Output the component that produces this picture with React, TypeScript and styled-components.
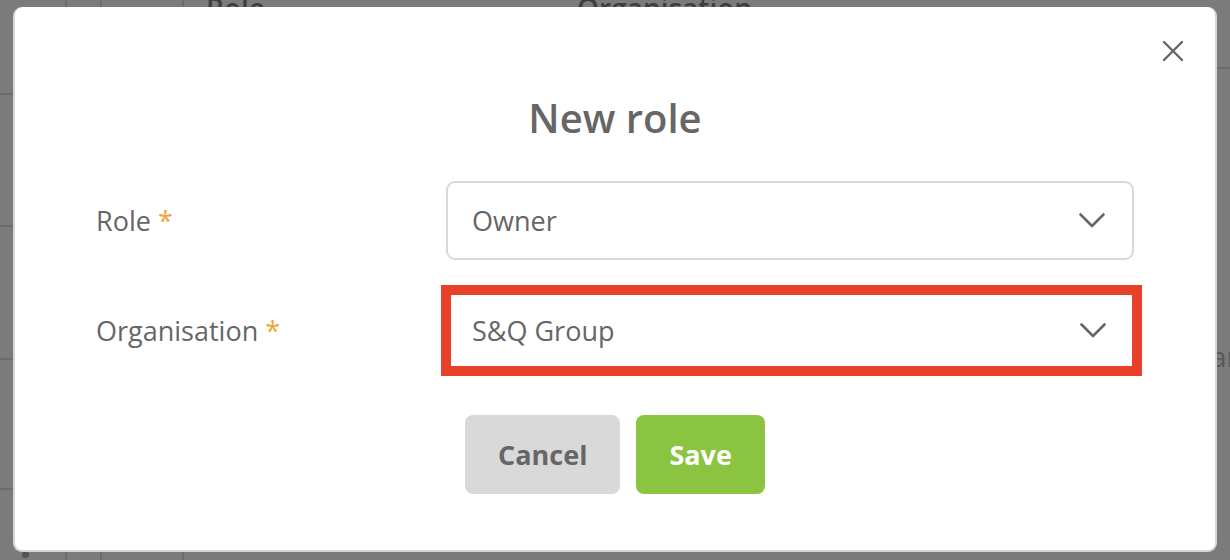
import React from "react";
import styled, { createGlobalStyle } from "styled-components";

const GlobalStyle = createGlobalStyle`
  html, body {
    margin: 0;
    padding: 0;
    overflow: hidden;
    background: #7b7b7b;
  }
  * {
    box-sizing: border-box;
  }
`;

const LINE = "#6c6c6c";

function App() {
  return (
    <>
      <GlobalStyle />
      <Page>
        <Table>
          <Row $height={104}>
            <Cell $line />
            <Cell $line />
            <Cell $line />
            <HeadCell>Role</HeadCell>
            <HeadCell>Organisation</HeadCell>
          </Row>
          <Row $height={132}>
            <Cell $line />
            <Cell $line />
            <Cell $line />
            <Cell />
            <Cell />
          </Row>
          <Row $height={133}>
            <Cell $line />
            <Cell $line />
            <Cell $line />
            <Cell />
            <Cell />
          </Row>
          <Row $height={130}>
            <Cell $line />
            <Cell $line />
            <Cell $line />
            <Cell />
            <Cell />
          </Row>
          <Row $height={120} $last>
            <Cell $line>
              <Bullet />
            </Cell>
            <Cell $line />
            <Cell $line />
            <Cell />
            <Cell />
          </Row>
        </Table>
        <SidePanel>
          <SideHead />
          <SideText>Plan</SideText>
        </SidePanel>
      </Page>

      <Modal>
        <CloseButton aria-label="Close">
          <svg width="20" height="20" viewBox="0 0 20 20">
            <path
              d="M1 1 L19 19 M19 1 L1 19"
              stroke="#666"
              strokeWidth="2.4"
              strokeLinecap="round"
            />
          </svg>
        </CloseButton>
        <Title>New role</Title>
        <Form>
          <FieldRow>
            <Label>
              Role <Required>*</Required>
            </Label>
            <Select>
              <span>Owner</span>
              <Chevron />
            </Select>
          </FieldRow>
          <FieldRow>
            <Label>
              Organisation <Required>*</Required>
            </Label>
            <Highlight>
              <Select $bare>
                <span>S&amp;Q Group</span>
                <Chevron />
              </Select>
            </Highlight>
          </FieldRow>
        </Form>
        <Actions>
          <Button>Cancel</Button>
          <Button $primary>Save</Button>
        </Actions>
      </Modal>
    </>
  );
}

const Chevron = () => (
  <svg width="26" height="15" viewBox="0 0 26 15">
    <path
      d="M1.5 1.5 L13 13 L24.5 1.5"
      fill="none"
      stroke="#666"
      strokeWidth="2.6"
      strokeLinecap="round"
      strokeLinejoin="round"
    />
  </svg>
);

export default App;

const Page = styled.div`
  display: flex;
  width: 100vw;
  height: 100vh;
  overflow: hidden;
  background: #7b7b7b;
  font-family: "Open Sans", "Liberation Sans", sans-serif;
`;

const Table = styled.div`
  width: 1160px;
  flex-shrink: 0;
  margin-top: -9px;
`;

const Row = styled.div<{ $height: number; $last?: boolean }>`
  display: grid;
  grid-template-columns: 67px 35px 82px 371px 1fr;
  height: ${(p) => p.$height}px;
  border-bottom: ${(p) => (p.$last ? "none" : `2px solid ${LINE}`)};
`;

const Cell = styled.div<{ $line?: boolean }>`
  border-right: ${(p) => (p.$line ? `2px solid ${LINE}` : "none")};
`;

const HeadCell = styled.div`
  padding-left: 22px;
  font-size: 28px;
  line-height: 34px;
  font-weight: 600;
  color: #3e3e3e;
`;

const Bullet = styled.div`
  width: 7px;
  height: 7px;
  margin: 61px 0 0 22px;
  border-radius: 50%;
  background: #555;
`;

const SidePanel = styled.div`
  flex: 1;
  display: flex;
  flex-direction: column;
`;

const SideHead = styled.div`
  height: 69px;
  border-bottom: 2px solid ${LINE};
`;

const SideText = styled.div`
  margin-top: 268px;
  padding-left: 27px;
  font-size: 28px;
  color: #585858;
  white-space: nowrap;
`;

const Modal = styled.div`
  position: fixed;
  top: 7px;
  left: 13px;
  width: 1204px;
  padding: 87px 81px 56px;
  background: #fff;
  border: 2px solid #d6d6d6;
  border-top: none;
  border-radius: 9px;
  font-family: "Open Sans", "Liberation Sans", sans-serif;
`;

const CloseButton = styled.button`
  position: absolute;
  top: 34px;
  right: 32px;
  width: 20px;
  height: 20px;
  padding: 0;
  border: none;
  background: none;
  cursor: pointer;
  display: flex;
`;

const Title = styled.h2`
  margin: 0 0 39px;
  text-align: center;
  font-size: 40px;
  line-height: 48px;
  font-weight: 600;
  color: #666;
`;

const Form = styled.div`
  display: flex;
  flex-direction: column;
  gap: 31px;
`;

const FieldRow = styled.div`
  display: flex;
  align-items: center;
`;

const Label = styled.div`
  width: 350px;
  flex-shrink: 0;
  font-size: 27px;
  color: #666;
`;

const Required = styled.span`
  color: #f0a33b;
`;

const Select = styled.div<{ $bare?: boolean }>`
  flex: 1;
  display: flex;
  align-items: center;
  justify-content: space-between;
  height: ${(p) => (p.$bare ? "71px" : "79px")};
  padding: ${(p) => (p.$bare ? "0 26px 0 21px" : "0 27px 0 24px")};
  border: ${(p) => (p.$bare ? "none" : "2px solid #d9d9d9")};
  border-radius: 9px;
  background: #fff;
  font-size: 27px;
  color: #666;
`;

const Highlight = styled.div`
  flex: 1;
  display: flex;
  margin: -6px -8px -6px -5px;
  border: 10px solid #e8412a;
`;

const Actions = styled.div`
  display: flex;
  justify-content: center;
  gap: 16px;
  margin-top: 45px;
`;

const Button = styled.button<{ $primary?: boolean }>`
  height: 79px;
  padding: 0 33px;
  border: none;
  border-radius: 8px;
  background: ${(p) => (p.$primary ? "#8bc441" : "#d9d9d9")};
  color: ${(p) => (p.$primary ? "#fff" : "#666")};
  font-family: "Open Sans", "Liberation Sans", sans-serif;
  font-size: 27px;
  font-weight: 700;
  cursor: pointer;
`;
